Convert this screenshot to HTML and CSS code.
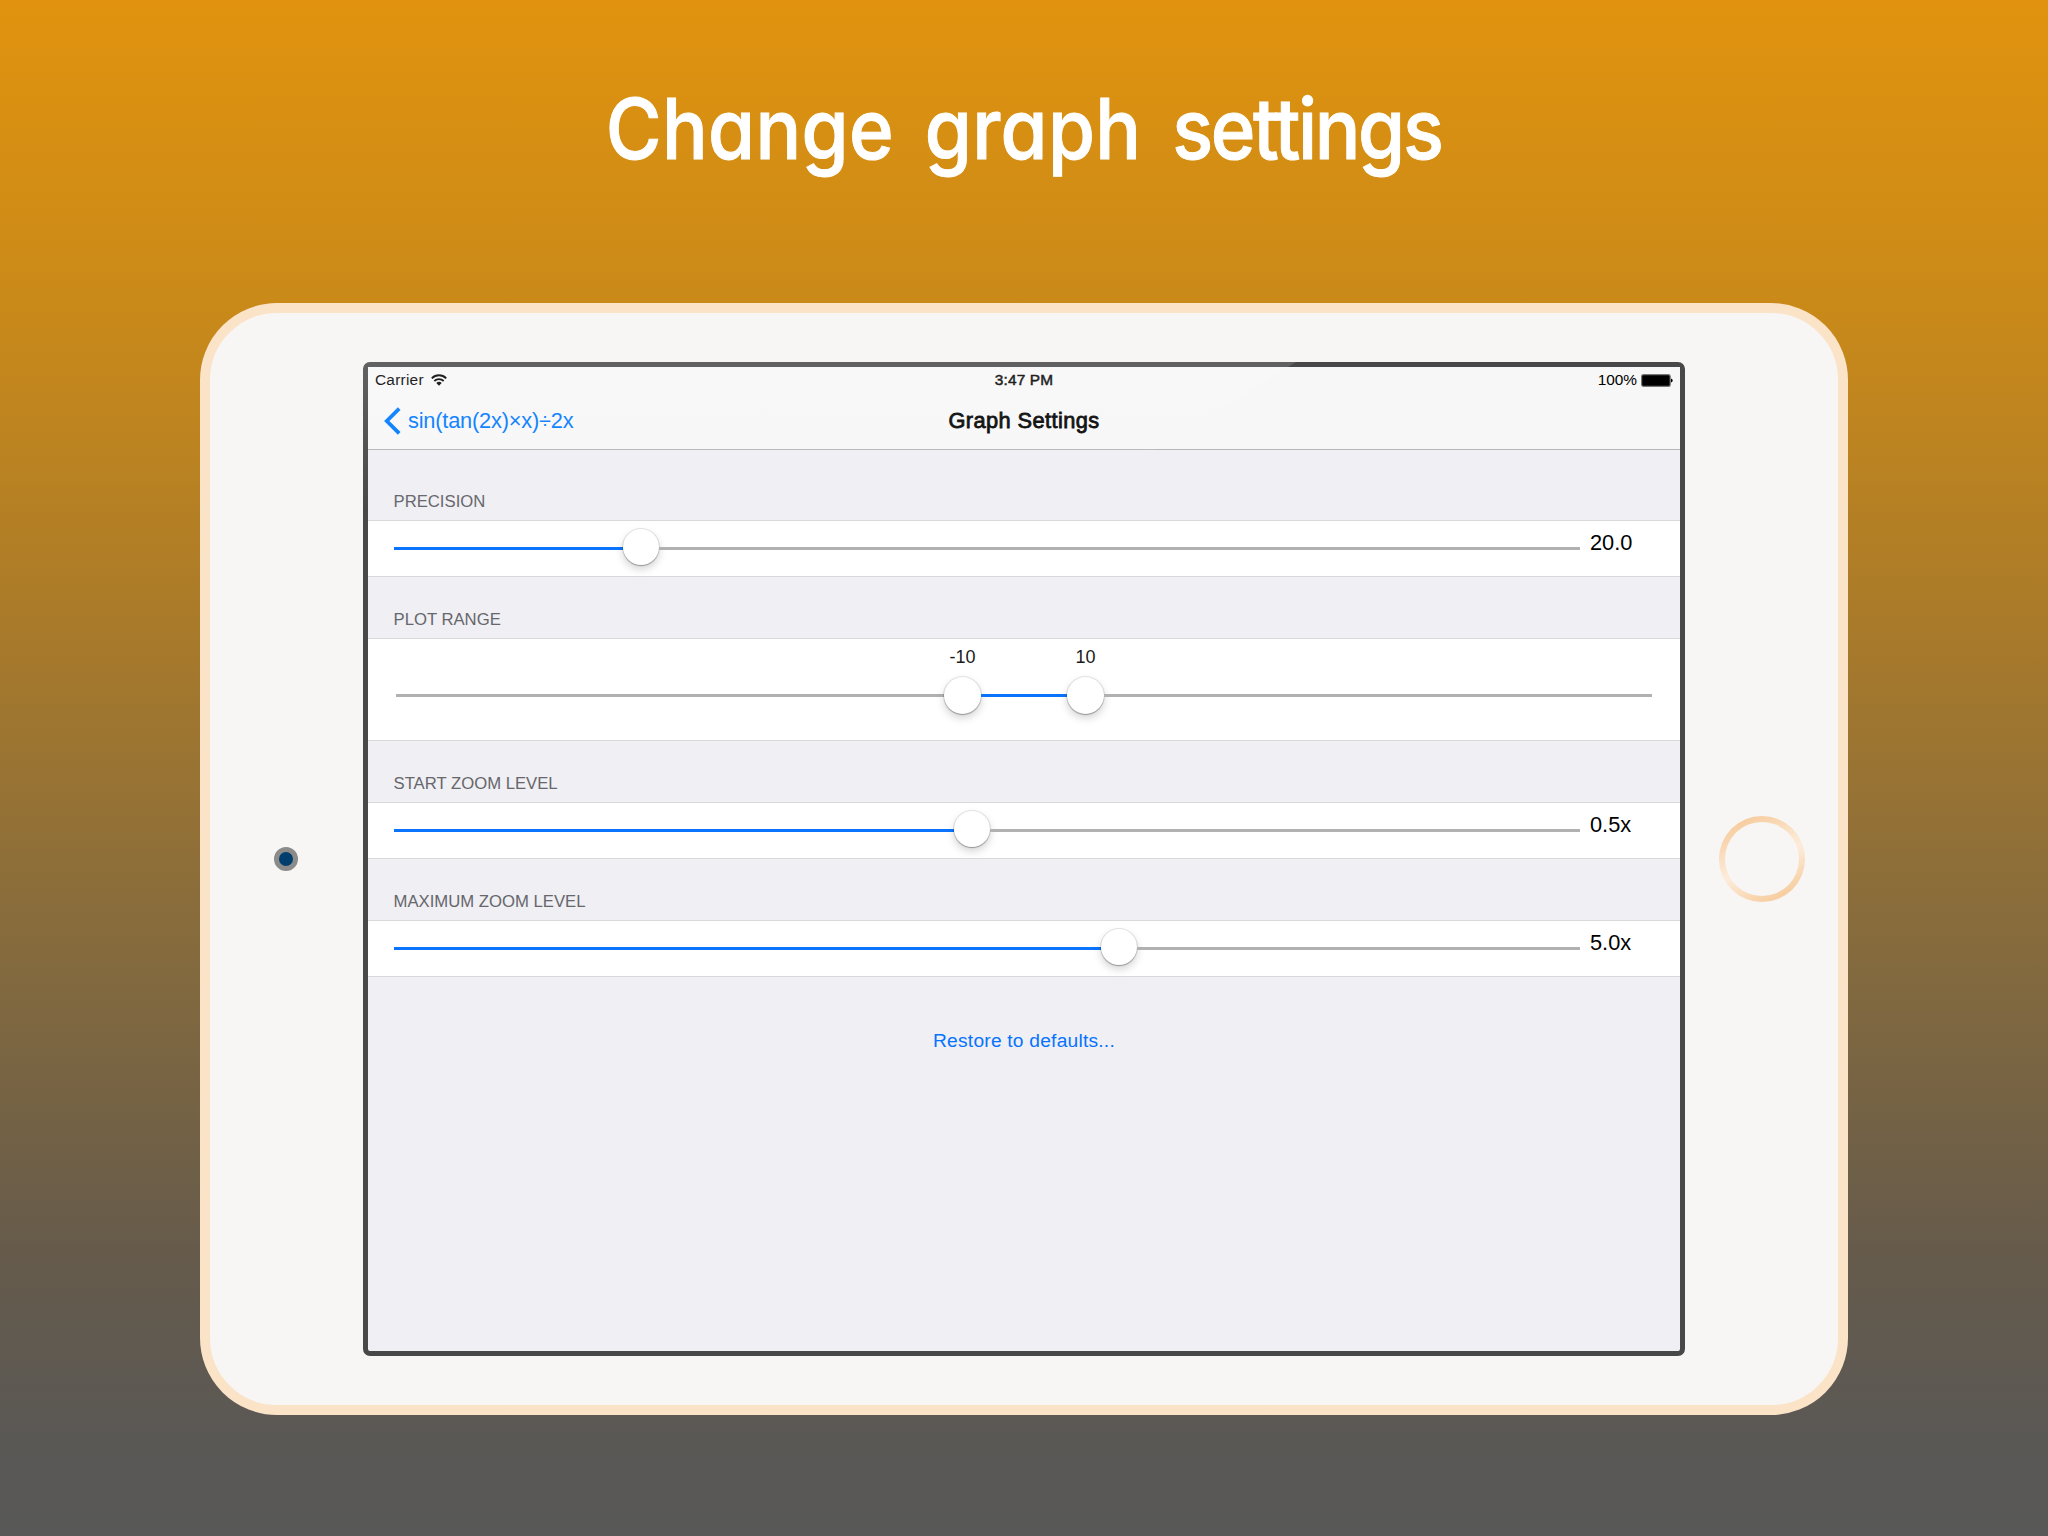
FILE: index.html
```html
<!DOCTYPE html>
<html lang="en">
<head>
<meta charset="utf-8">
<title>Change graph settings</title>
<link rel="stylesheet" href="styles.css">
</head>
<body>
<main class="promo">
  <h1 class="headline"><span>Change</span> <span>graph</span> <span class="tight">settings</span></h1>
  <div class="tablet">
    <div class="camera"></div>
    <div class="screen">
      <header class="status">
        <div class="status-left">
          <span>Carrier</span>
          <svg class="wifi" viewBox="0 0 16 12" width="16" height="12">
            <path d="M0.8 4.3 A10.2 10.2 0 0 1 15.2 4.3" fill="none" stroke="#000" stroke-width="1.9"/>
            <path d="M3.3 7 A6.7 6.7 0 0 1 12.7 7" fill="none" stroke="#000" stroke-width="1.8"/>
            <path d="M8 11.8 L5.3 9.1 A3.8 3.8 0 0 1 10.7 9.1 Z"/>
          </svg>
        </div>
        <span class="clock">3:47 PM</span>
        <div class="status-right">
          <span>100%</span>
          <svg viewBox="0 0 32 13" width="32" height="13">
            <rect x="0.6" y="0.6" width="28.6" height="11.8" rx="2" fill="#000" stroke="#777" stroke-width="1.2"/>
            <path d="M30 4.4 Q31.7 4.8 31.7 6.5 Q31.7 8.2 30 8.6 Z"/>
          </svg>
        </div>
      </header>
      <nav class="navbar">
        <div class="back">
          <svg viewBox="0 0 17 28" width="17" height="28"><path d="M15.2 1.6 L2.8 14 L15.2 26.4" fill="none" stroke="#007aff" stroke-width="3.8"/></svg>
          <span>sin(tan(2x)×x)÷2x</span>
        </div>
        <span class="nav-title">Graph Settings</span>
        <span></span>
      </nav>
      <h2 class="section first">PRECISION</h2>
      <div class="row">
        <div class="slider"><i class="fill" style="width:229px"></i><i class="thumb"></i><i class="rest"></i></div>
        <span class="value">20.0</span>
      </div>
      <h2 class="section">PLOT RANGE</h2>
      <div class="row range">
        <div class="range-labels"><span>-10</span><span>10</span></div>
        <div class="slider"><i class="gap" style="width:548px"></i><i class="thumb"></i><i class="fill" style="width:86px"></i><i class="thumb"></i><i class="rest"></i></div>
      </div>
      <h2 class="section">START ZOOM LEVEL</h2>
      <div class="row">
        <div class="slider"><i class="fill" style="width:560px"></i><i class="thumb"></i><i class="rest"></i></div>
        <span class="value">0.5x</span>
      </div>
      <h2 class="section">MAXIMUM ZOOM LEVEL</h2>
      <div class="row">
        <div class="slider"><i class="fill" style="width:707px"></i><i class="thumb"></i><i class="rest"></i></div>
        <span class="value">5.0x</span>
      </div>
      <div class="restore">Restore to defaults...</div>
      <div class="glare"></div>
    </div>
    <div class="home"></div>
  </div>
</main>
</body>
</html>
```
FILE: styles.css
```css
* { box-sizing: border-box; }

body { margin: 0; }

.promo {
  width: 2048px;
  height: 1536px;
  overflow: hidden;
  display: flex;
  flex-direction: column;
  align-items: center;
  background: linear-gradient(#e1930e 0, #ca8a19 300px, #ad7c28 590px, #8a6d3b 900px, #665b4b 1250px, #5a5855 1440px, #585858 1536px);
  font-family: "Liberation Sans", Arial, sans-serif;
}

.headline {
  margin: 0;
  height: 303px;
  flex: none;
  display: flex;
  gap: 34px;
  padding-top: 77px;
  font: 500 84px/104px Inter, sans-serif;
  font-feature-settings: "cv11", "ss03";
  letter-spacing: .4px;
  -webkit-text-stroke: 1px #fff;
  color: #fff;
  white-space: nowrap;
  transform: scaleX(.905);
}

.headline .tight { letter-spacing: -2.6px; }

.tablet {
  flex: none;
  width: 1648px;
  height: 1112px;
  border: 10px solid #fbe3c8;
  border-radius: 77px;
  background: #f7f6f4;
  display: grid;
  grid-template-columns: 153px 1322px 153px;
  align-items: center;
  justify-items: center;
}

.camera {
  width: 24px;
  height: 24px;
  margin-right: 1px;
  border: 5px solid #8b8b8a;
  border-radius: 50%;
  background: #003e6e;
}

.home {
  width: 86px;
  height: 86px;
  border-radius: 50%;
  border: 6px solid transparent;
  background:
    linear-gradient(#f7f6f4, #f7f6f4) padding-box,
    linear-gradient(155deg, #f7cfa3 15%, #fcebd8 50%, #fcebd8 55%, #f7cfa3 85%) border-box;
}

.screen {
  position: relative;
  width: 1322px;
  height: 994px;
  border: 5px solid #484848;
  border-radius: 7px;
  background: #efeff4;
}

.glare {
  position: absolute;
  inset: -5px;
  border-radius: 7px;
  background: linear-gradient(rgba(255, 255, 255, .14), rgba(255, 255, 255, .06) 80px, rgba(255, 255, 255, 0) 150px);
  clip-path: polygon(0 0, 933px 0, 660px 170px, 0 170px);
}

.status, .navbar {
  display: grid;
  grid-template-columns: 1fr auto 1fr;
  align-items: center;
  background: #f7f7f7;
}

.status {
  height: 26px;
  font-size: 15.4px;
  padding: 0 7px;
}

.status-left, .status-right, .back { display: flex; align-items: center; }
.status-left { gap: 7px; letter-spacing: .25px; }
.wifi { margin-bottom: 1px; }
.status-right { gap: 4px; justify-content: flex-end; }
.clock { -webkit-text-stroke: .5px #000; letter-spacing: .2px; }

.navbar {
  height: 57px;
  padding: 0 16px;
  border-bottom: 1px solid #b6b6ba;
  font-size: 21.8px;
}

.back { color: #007aff; gap: 7px; letter-spacing: -.2px; }
.nav-title { -webkit-text-stroke: .8px #000; letter-spacing: .4px; }

.section {
  margin: 0;
  height: 61px;
  padding: 33px 25.5px 0;
  font-size: 16.7px;
  line-height: 20px;
  font-weight: 400;
  color: #66666b;
}

.section.first { height: 70px; padding-top: 42px; }

.row {
  height: 57px;
  border: solid #d9d9dc;
  border-width: 1px 0;
  background: #fff;
  display: flex;
  align-items: center;
  padding-left: 26px;
}

.slider { flex: none; width: 1186px; height: 37px; display: flex; align-items: center; }

.fill, .gap, .rest { height: 3px; flex: none; background: #0a74ff; }
.gap, .rest { background: #b1b1b1; }
.rest { flex: 1; }

.thumb {
  flex: none;
  width: 36px;
  height: 36px;
  margin-bottom: 3px;
  border-radius: 50%;
  background: #fff;
  box-shadow: 0 0 0 1px rgba(0, 0, 0, .09), 0 1px 1px rgba(0, 0, 0, .25), 0 4px 8px rgba(0, 0, 0, .18);
}

.value { margin: 0 0 12px 10px; font-size: 21.8px; line-height: 26px; }

.range { height: 103px; display: block; padding: 7px 28px 0; }
.range .slider { width: 1256px; margin-top: 9px; }
.range .thumb { margin-bottom: 1px; width: 37px; height: 37px; }

.range-labels {
  display: grid;
  grid-template-columns: 123px 123px;
  padding-left: 505px;
  text-align: center;
  font-size: 18px;
  line-height: 22px;
  color: #1a1a1a;
}

.restore {
  padding-top: 52px;
  text-align: center;
  font-size: 19.2px;
  letter-spacing: .22px;
  line-height: 24px;
  color: #0673ff;
}
```
